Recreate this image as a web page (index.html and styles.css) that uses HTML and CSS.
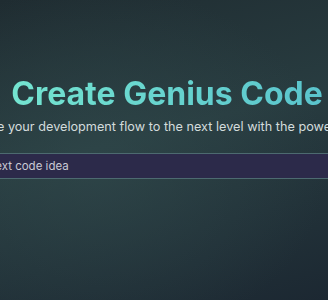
FILE: index.html
```html
<!DOCTYPE html>
<html lang="en">
<head>
<meta charset="utf-8">
<link rel="stylesheet" href="styles.css">
</head>
<body>
<main class="hero">
  <h1 class="title">Create Genius Code</h1>
  <p class="subtitle">Elevate your development flow to the next level with the power of AI.</p>
  <form class="prompt">
    <input class="prompt-input" type="text" placeholder="Describe your next code idea">
  </form>
</main>
</body>
</html>
```

FILE: styles.css
```css
html, body {
  margin: 0;
  height: 100%;
}
body {
  background:
    radial-gradient(ellipse 70% 60% at 30% 55%, rgba(50, 76, 78, 0.55), rgba(50, 76, 78, 0) 100%),
    linear-gradient(165deg, #1f2c31 0%, #283c40 45%, #1c2832 100%);
  font-family: Inter, "Noto Sans", sans-serif;
  overflow: hidden;
}
.hero {
  display: flex;
  flex-direction: column;
  align-items: center;
  padding-top: 74px;
}
.title {
  margin: 0 0 0 6px;
  font-size: 32px;
  font-weight: 700;
  line-height: 40px;
  white-space: nowrap;
  background: linear-gradient(90deg, #74e4d0, #5ac4cd);
  -webkit-background-clip: text;
  background-clip: text;
  color: transparent;
}
.subtitle {
  margin: 4px 0 0 4px;
  font-size: 12.7px;
  line-height: 18px;
  color: #d3dcdc;
  white-space: nowrap;
}
.prompt {
  margin-top: 17px;
  display: flex;
  justify-content: center;
}
.prompt-input {
  width: 536px;
  height: 26px;
  box-sizing: border-box;
  padding: 0 12px;
  border: 1px solid #4d6a70;
  border-radius: 4px;
  background: #2c2a4a;
  color: #d0d0da;
  font-family: Inter, sans-serif;
  font-size: 11.5px;
  outline: none;
}
.prompt-input::placeholder {
  color: #c9c9d4;
}
```
